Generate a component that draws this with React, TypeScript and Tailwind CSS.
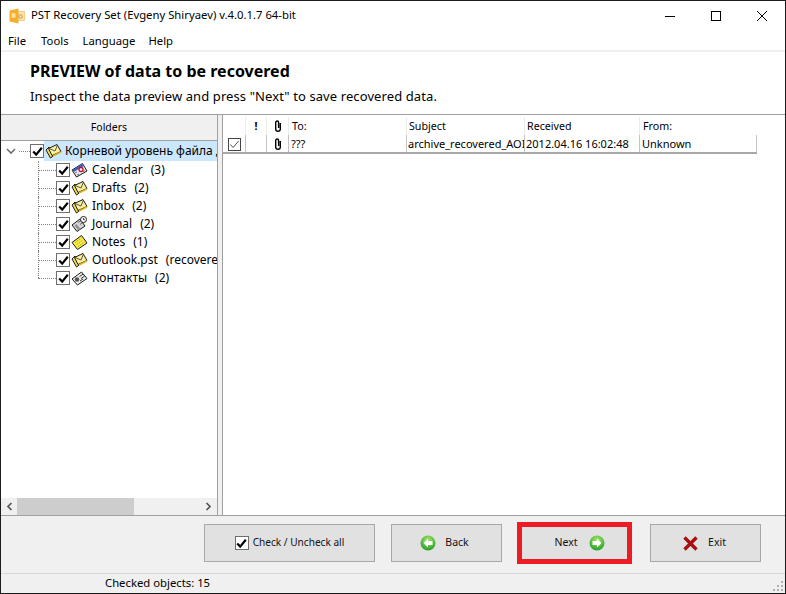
import React from "react";

const ui = "font-['Noto_Sans','Liberation_Sans',sans-serif]";

function Check({ size = 14 }: { size?: number }) {
  return (
    <span className="flex shrink-0 items-center justify-center border border-[#6f6f6f] bg-white" style={{ width: size, height: size }}>
      <svg width="11" height="11" viewBox="0 0 11 11">
        <path d="M1.2 5.5 L4.2 8.6 L9.8 1.8" fill="none" stroke="#000" strokeWidth="2.2" />
      </svg>
    </span>
  );
}

function MailIcon({ kind }: { kind: string }) {
  if (kind === "calendar")
    return (
      <svg width="17" height="16" viewBox="0 0 17 16" className="shrink-0">
        <path d="M1 8 L11.5 1.5 L16 9 L5.5 15Z" fill="#e8e8f0" stroke="#1a1a1a" />
        <path d="M1.5 8 L11.5 2 L12.8 4 L2.8 10Z" fill="#3a5cc0" />
        <path d="M4 11 L6 10 M6 13 L8 12 M12 9.5 L14 8.5" stroke="#777" />
        <circle cx="10" cy="7.5" r="2" fill="#fff" stroke="#c01030" strokeWidth="1.3" />
      </svg>
    );
  if (kind === "journal")
    return (
      <svg width="17" height="16" viewBox="0 0 17 16" className="shrink-0">
        <path d="M1 9 L9 3 L14 10 L6 15.5Z" fill="#d4d4d4" stroke="#1a1a1a" />
        <path d="M3.5 9.5 L5.5 8 L9.5 13 L7.5 14.5Z" fill="#909090" />
        <path d="M7 6.5 L10 4.5 M9 8.5 L12 6.5" stroke="#666" />
        <circle cx="12.5" cy="3.5" r="3" fill="#fff" stroke="#1a1a1a" />
        <path d="M12.5 2 V3.7 H14" fill="none" stroke="#1a1a1a" strokeWidth="0.8" />
      </svg>
    );
  if (kind === "notes")
    return (
      <svg width="17" height="16" viewBox="0 0 17 16" className="shrink-0">
        <path d="M1 8.5 L10.5 1.5 L16 9 L6.5 15.5Z" fill="#f8ec48" stroke="#1a1a1a" />
        <path d="M4 8.5 L10.5 4 M5.5 10.5 L12 6 M7 12.5 L13.5 8" stroke="#b0a020" strokeDasharray="1.5 1" />
      </svg>
    );
  if (kind === "contacts")
    return (
      <svg width="17" height="16" viewBox="0 0 17 16" className="shrink-0">
        <path d="M1 9 L10.5 2 L16 8.5 L6.5 15Z" fill="#ececec" stroke="#1a1a1a" />
        <circle cx="6" cy="9.5" r="2.3" fill="#555" />
        <path d="M8.5 6.5 L12 4.2 M10 8.5 L13.5 6.2 M9 11 L12 9" stroke="#333" />
      </svg>
    );
  return (
    <svg width="17" height="16" viewBox="0 0 17 16" className="shrink-0">
      <path d="M1 7 L4 4 L8 13 L5.5 15Z" fill="#f6df3a" stroke="#1a1a1a" />
      <path d="M3.5 5.5 L12 1.5 L16 8.5 L7 12.5Z" fill="#fbf0a0" stroke="#1a1a1a" />
      <path d="M4 5.5 L10 8 L12.5 2" fill="none" stroke="#444" strokeWidth="0.9" />
      <path d="M8 13 L16 9" stroke="#d8b820" strokeWidth="1.4" />
    </svg>
  );
}

function Arrow({ dir }: { dir: "left" | "right" }) {
  return (
    <svg width="16" height="16" viewBox="0 0 16 16" className="shrink-0">
      <defs>
        <radialGradient id={`g${dir}`} cx="50%" cy="30%" r="75%">
          <stop offset="0%" stopColor="#a6e86a" />
          <stop offset="100%" stopColor="#1c9a24" />
        </radialGradient>
      </defs>
      <circle cx="8" cy="8" r="7.5" fill={`url(#g${dir})`} />
      <path
        d={dir === "left" ? "M8 3.5 L3.5 8 L8 12.5 V10 H12.5 V6 H8Z" : "M8 3.5 L12.5 8 L8 12.5 V10 H3.5 V6 H8Z"}
        fill="#fff"
      />
    </svg>
  );
}

function Btn({ className, children }: { className: string; children: React.ReactNode }) {
  return (
    <div className={`flex h-[38px] items-center justify-center border border-[#a8a8a8] bg-[#e1e1e1] text-[10.5px] text-[#111] ${className}`}>
      {children}
    </div>
  );
}

const tree: [string, string, string][] = [
  ["calendar", "Calendar", "(3)"],
  ["mail", "Drafts", "(2)"],
  ["mail", "Inbox", "(2)"],
  ["journal", "Journal", "(2)"],
  ["notes", "Notes", "(1)"],
  ["mail", "Outlook.pst", "(recovered)"],
  ["contacts", "Контакты", "(2)"],
];

const cols = "grid w-[534px] grid-cols-[23px_21px_22px_118px_118px_115px_117px]";
const headCell = "flex h-full items-center border-r border-[#ececec]";
const cell = "flex items-center overflow-hidden whitespace-nowrap border-r border-[#c4c4c4] pt-[1px]";

export default function App() {
  return (
    <div className={`flex h-[594px] w-[786px] flex-col overflow-hidden border border-[#1c1c1c] bg-[#f0f0f0] ${ui} text-[11px] text-black`}>
      <div className="flex h-[29px] shrink-0 items-center bg-white">
        <svg width="16" height="16" viewBox="0 0 16 16" className="ml-[8px] shrink-0">
          <path d="M0.5 2.5 L9.5 0.5 V15.5 L0.5 13.5Z" fill="#f7ae2b" />
          <rect x="2.5" y="5" width="4" height="5" rx="1.5" fill="#fbe3a0" />
          <rect x="9.5" y="3.5" width="6" height="9" fill="#f9e2ab" stroke="#e8b860" strokeWidth="0.6" />
          <circle cx="11.5" cy="8.5" r="2.3" fill="#e9a848" />
          <circle cx="11.5" cy="8.5" r="0.9" fill="#fff4d8" />
        </svg>
        <span className="ml-[6px] text-[11.3px]">PST Recovery Set (Evgeny Shiryaev) v.4.0.1.7 64-bit</span>
        <div className="ml-auto flex items-center">
          <svg width="46" height="29" viewBox="0 0 46 29"><path d="M18 15.5 H28" stroke="#000" /></svg>
          <svg width="46" height="29" viewBox="0 0 46 29"><rect x="18.5" y="10.5" width="9" height="9" fill="none" stroke="#000" /></svg>
          <svg width="46" height="29" viewBox="0 0 46 29"><path d="M18 10 L28 20 M28 10 L18 20" stroke="#000" /></svg>
        </div>
      </div>
      <div className="flex h-[20px] shrink-0 items-center bg-white pl-[7px] pt-[2px] text-[11.3px]">
        <span>File</span>
        <span className="ml-[15px]">Tools</span>
        <span className="ml-[14px]">Language</span>
        <span className="ml-[13px]">Help</span>
      </div>
      <div className="flex h-[65px] shrink-0 flex-col border-t-2 border-b border-t-[#f0f0f0] border-b-[#a0a0a0] bg-white pl-[29px]">
        <div className="mt-[7px] text-[16px] font-bold leading-[24px]">PREVIEW of data to be recovered</div>
        <div className="mt-[3px] text-[13px] leading-[20px] tracking-[0.1px]">Inspect the data preview and press "Next" to save recovered data.</div>
      </div>

      <div className="flex min-h-0 flex-1 border-b border-[#a0a0a0]">
        <div className="flex w-[216px] shrink-0 flex-col bg-white">
          <div className="flex h-[26px] shrink-0 items-center justify-center border-b border-[#a0a0a0] bg-[#f0f0f0] text-[10.5px]">Folders</div>
          <div className="relative min-h-0 flex-1 overflow-hidden text-[12px]">
            <div className="flex h-[20px] items-center">
              <svg width="10" height="7" viewBox="0 0 10 7" className="ml-[5px] shrink-0">
                <path d="M1 1 L5 5 L9 1" fill="none" stroke="#707070" strokeWidth="1.6" />
              </svg>
              <span className="ml-[3px] h-0 w-[11px] border-t border-dotted border-[#808080]" />
              <Check />
              <div className="flex h-full flex-1 items-center gap-[3px] overflow-hidden whitespace-nowrap bg-[#cce8ff] pl-[1px]">
                <MailIcon kind="mail" />
                <span>Корневой уровень файла данных</span>
              </div>
            </div>
            {tree.map(([k, n, c], i) => (
              <div key={n} className="relative flex h-[18px] items-center pl-[37px]">
                <span className={`absolute left-[37px] top-0 w-0 border-l border-dotted border-[#808080] ${i === tree.length - 1 ? "h-[9px]" : "h-[18px]"}`} />
                <span className="h-0 w-[18px] shrink-0 border-t border-dotted border-[#808080]" />
                <Check />
                <span className="ml-[1px]"><MailIcon kind={k} /></span>
                <span className="ml-[4px] whitespace-nowrap">{n}</span>
                <span className="ml-[8px] whitespace-nowrap">{c}</span>
              </div>
            ))}
          </div>
          <div className="flex h-[17px] shrink-0 items-center bg-[#f0f0f0]">
            <span className="flex w-[16px] justify-center">
              <svg width="7" height="9" viewBox="0 0 7 9"><path d="M5.5 1 L2 4.5 L5.5 8" fill="none" stroke="#555" strokeWidth="1.7" /></svg>
            </span>
            <span className="h-full w-[117px] bg-[#cdcdcd]" />
            <span className="ml-auto flex w-[17px] justify-center">
              <svg width="7" height="9" viewBox="0 0 7 9"><path d="M1.5 1 L5 4.5 L1.5 8" fill="none" stroke="#555" strokeWidth="1.7" /></svg>
            </span>
          </div>
        </div>
        <div className="w-[6px] shrink-0 border-x border-[#a0a0a0] bg-[#f0f0f0]" />
        <div className="min-w-0 flex-1 bg-white">
          <div className={`${cols} h-[20px] items-center pt-[2px] text-[10.7px]`}>
            <span className={headCell} />
            <span className={`${headCell} justify-center font-bold`}>!</span>
            <span className={`${headCell} justify-center`}><Clip /></span>
            <span className={`${headCell} pl-[3px]`}>To:</span>
            <span className={`${headCell} pl-[2px]`}>Subject</span>
            <span className={`${headCell} pl-[2px]`}>Received</span>
            <span className="flex h-full items-center pl-[3px]">From:</span>
          </div>
          <div className={`${cols} h-[19px] border-b-2 border-[#a8a8a8]`}>
            <span className={`${cell} justify-center pl-[1px]`}>
              <span className="flex h-[13px] w-[13px] items-center justify-center border border-[#444]">
                <svg width="11" height="11" viewBox="0 0 11 11"><path d="M1.5 5.5 L4.2 8.5 L9.5 2" fill="none" stroke="#555" /></svg>
              </span>
            </span>
            <span className={cell} />
            <span className={`${cell} justify-center`}><Clip /></span>
            <span className={`${cell} pl-[2px]`}>???</span>
            <span className={`${cell} pl-[1px]`}>archive_recovered_AOI</span>
            <span className={`${cell} pl-[1px]`}>2012.04.16 16:02:48</span>
            <span className={`${cell} pl-[2px]`}>Unknown</span>
          </div>
        </div>
      </div>

      <div className="flex h-[58px] shrink-0 items-start border-b border-[#d8d8d8] pt-[8px]">
        <Btn className="ml-[203px] w-[171px] gap-[4px]">
          <Check />
          <span className="text-[10.1px]">Check / Uncheck all</span>
        </Btn>
        <Btn className="ml-[16px] w-[111px] gap-[9px] pr-[4px]">
          <Arrow dir="left" />
          <span>Back</span>
        </Btn>
        <div className="ml-[15px] -mt-[2px] h-[42px] w-[115px] border-[5px] border-[#ed1c24]">
          <div className="flex h-full items-center justify-center gap-[11px] bg-[#e1e1e1] pl-[10px] text-[10.5px] text-[#111]">
            <span>Next</span>
            <Arrow dir="right" />
          </div>
        </div>
        <Btn className="ml-[18px] w-[111px] gap-[10px] pr-[2px]">
          <svg width="15" height="15" viewBox="0 0 15 15">
            <path d="M1.5 1.5 L13.5 13.5 M13.5 1.5 L1.5 13.5" stroke="#a80f0f" strokeWidth="3.4" />
          </svg>
          <span>Exit</span>
        </Btn>
      </div>
      <div className="relative flex h-[19px] shrink-0 items-center pl-[104px] text-[11.3px]">
        <span>Checked objects: 15</span>
        <svg width="11" height="11" viewBox="0 0 11 11" className="absolute bottom-[1px] right-[1px]">
          <g fill="#b0b0b0">
            <rect x="8" y="0" width="2" height="2" />
            <rect x="4" y="4" width="2" height="2" />
            <rect x="8" y="4" width="2" height="2" />
            <rect x="0" y="8" width="2" height="2" />
            <rect x="4" y="8" width="2" height="2" />
            <rect x="8" y="8" width="2" height="2" />
          </g>
        </svg>
      </div>
    </div>
  );
}

function Clip() {
  return (
    <svg width="8" height="12" viewBox="0 0 8 12">
      <path d="M6.3 3 V9 A2.3 2.3 0 0 1 1.7 9 V2.5 A1.4 1.4 0 0 1 4.6 2.5 V8" fill="none" stroke="#000" strokeWidth="1.4" />
    </svg>
  );
}
